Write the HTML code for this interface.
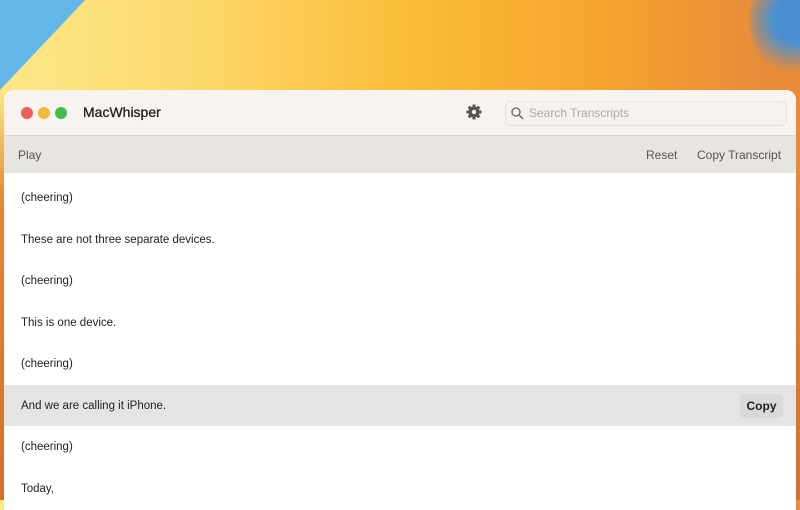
<!DOCTYPE html>
<html><head><style>
body{margin:0;width:800px;height:500px;overflow:hidden;font-family:"Liberation Sans",sans-serif;position:relative;
background:linear-gradient(180deg,rgba(232,140,58,0) 0%,rgba(232,140,58,0) 18%,#e0893a 40%,#d07030 100%),linear-gradient(90deg,#fde78a 0%,#fcd86a 25%,#fbbd3a 50%,#f4a52c 75%,#e88c3a 95%);}
.bg1{position:absolute;left:0;top:0;width:0;height:0;border-top:90px solid #62b6e8;border-right:85px solid transparent;}
.bg2{position:absolute;right:-40px;top:-40px;width:90px;height:120px;border-radius:50%;background:radial-gradient(circle,#4a90d0 30%,rgba(74,144,208,0) 70%);}
.win{position:absolute;left:4px;top:90px;width:792px;height:420px;background:#fff;border-radius:10px 10px 0 0;overflow:hidden;}
.title{height:45px;background:#f8f3ee;border-bottom:1px solid #d8d3ce;position:relative}
.dot{position:absolute;top:17px;width:12px;height:12px;border-radius:50%}
.tb{height:37px;background:#e8e4e0;position:relative;font-size:12px;color:#555}
.row{height:41.5px;line-height:43px;padding-left:17px;font-size:11.5px;color:#222;position:relative}
</style></head><body>
<div class="bg1"></div><div class="bg2"></div>
<div class="win">
<div class="title">
<div class="dot" style="left:17px;background:#ec5f57"></div>
<div class="dot" style="left:34px;background:#f2b93b"></div>
<div class="dot" style="left:51px;background:#40c048"></div>
<div style="position:absolute;left:79px;top:14px;font-size:14px;color:#222;-webkit-text-stroke:0.3px #222">MacWhisper</div>
<svg style="position:absolute;left:462px;top:14px" width="16" height="16" viewBox="0 0 16 16"><g fill="#555"><circle cx="8" cy="8" r="5.5"/><g stroke="#555" stroke-width="3"><line x1="8" y1="0.5" x2="8" y2="15.5"/><line x1="0.5" y1="8" x2="15.5" y2="8"/><line x1="2.7" y1="2.7" x2="13.3" y2="13.3"/><line x1="13.3" y1="2.7" x2="2.7" y2="13.3"/></g></g><circle cx="8" cy="8" r="2.2" fill="#f8f3ee"/></svg>
<div style="position:absolute;left:501px;top:11px;width:280px;height:23px;background:#f5f1ec;border:1px solid #e6e1dc;border-radius:5px">
<svg style="position:absolute;left:5px;top:5px" width="13" height="13" viewBox="0 0 13 13"><circle cx="5" cy="5" r="4" stroke="#666" stroke-width="1.3" fill="none"/><line x1="8" y1="8" x2="12" y2="12" stroke="#666" stroke-width="1.4"/></svg>
<span style="position:absolute;left:23px;top:4px;font-size:12px;color:#aaa">Search Transcripts</span></div>
</div>
<div class="tb"><span style="position:absolute;left:14px;top:12px">Play</span><span style="position:absolute;left:642px;top:12px">Reset</span><span style="position:absolute;left:693px;top:12px">Copy Transcript</span></div>
<div style="height:4px"></div>
<div class="row">(cheering)</div>
<div class="row">These are not three separate devices.</div>
<div class="row">(cheering)</div>
<div class="row">This is one device.</div>
<div class="row">(cheering)</div>
<div class="row" style="background:#e4e4e4">And we are calling it iPhone.<span style="position:absolute;left:736px;top:9px;width:43px;height:24px;line-height:24px;background:#d9d9d9;border-radius:4px;text-align:center;font-weight:bold;font-size:12px">Copy</span></div>
<div class="row">(cheering)</div>
<div class="row">Today,</div>
</div>
</body></html>
